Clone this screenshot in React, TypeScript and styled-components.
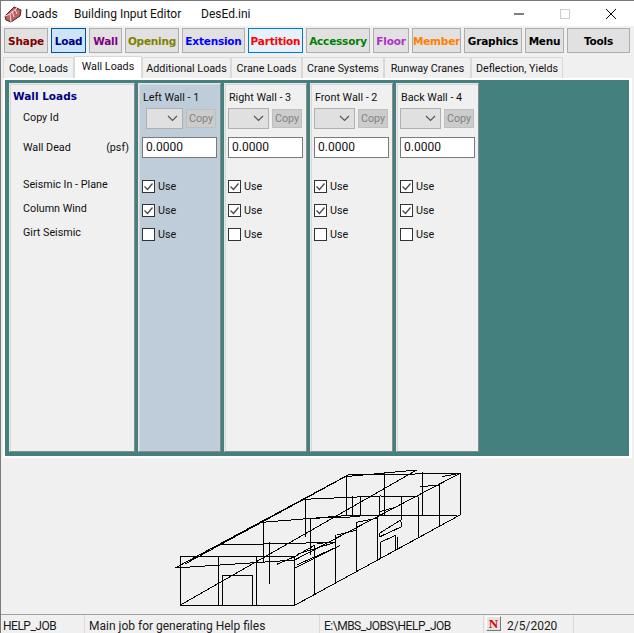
import React from "react";
import styled, { createGlobalStyle } from "styled-components";

const Global = createGlobalStyle`
  html, body {
    margin: 0;
    padding: 0;
    background: #f0f0f0;
  }
`;

const Win = styled.div`
  width: 634px;
  height: 633px;
  box-sizing: border-box;
  overflow: hidden;
  display: flex;
  flex-direction: column;
  background: #f0f0f0;
  border-left: 1px solid #7a7a7a;
  border-top: 1px solid #7a7a7a;
  font-family: Roboto, "Open Sans", sans-serif;
  font-size: 10.75px;
  color: #111;
`;

const TitleBar = styled.div`
  height: 25px;
  flex: none;
  display: flex;
  align-items: center;
  background: #fff;
  font-size: 12px;
`;

const TitleIcon = styled.svg`
  width: 18px;
  height: 18px;
  margin-left: 3px;
  margin-right: 3px;
`;

const TitleText = styled.span<{ $w: number }>`
  width: ${(p) => p.$w}px;
  white-space: nowrap;
`;

const WinButtons = styled.div`
  margin-left: auto;
  display: flex;
  align-items: center;
`;

const WinButton = styled.svg`
  width: 46px;
  height: 25px;
`;

const Toolbar = styled.div`
  flex: none;
  display: flex;
  gap: 3px;
  padding: 2px 0 0 3px;
  height: 27px;
  box-sizing: border-box;
`;

const ToolButton = styled.div<{ $w: number; $color: string; $state?: "on" | "hot" }>`
  width: ${(p) => p.$w}px;
  height: 25px;
  box-sizing: border-box;
  display: flex;
  align-items: center;
  justify-content: center;
  font-family: "DejaVu Sans", sans-serif;
  font-weight: bold;
  font-size: 10.5px;
  letter-spacing: -0.2px;
  color: ${(p) => p.$color};
  background: ${(p) => (p.$state === "on" ? "#cce4f7" : p.$state === "hot" ? "#e5f1fb" : "#e1e1e1")};
  border: ${(p) => (p.$state === "on" ? "1px solid #005499" : p.$state === "hot" ? "1px solid #0078d7" : "1px solid #adadad")};
`;

const Tabs = styled.div`
  flex: none;
  display: flex;
  height: 25px;
  padding: 3px 0 0 2px;
  box-sizing: border-box;
  align-items: flex-end;
`;

const Tab = styled.div<{ $w: number; $active?: boolean }>`
  width: ${(p) => p.$w}px;
  height: ${(p) => (p.$active ? 22 : 21)}px;
  box-sizing: border-box;
  display: flex;
  align-items: center;
  justify-content: center;
  white-space: nowrap;
  padding-bottom: ${(p) => (p.$active ? 2 : 0)}px;
  background: ${(p) => (p.$active ? "#fff" : "#f0f0f0")};
  border: 1px solid #d9d9d9;
  border-bottom: none;
`;

const TabPage = styled.div`
  flex: none;
  height: 380px;
  background: #fff;
  padding: 2px 3px 2px 2px;
  margin: 0 2px 0 2px;
  box-sizing: border-box;
`;

const Teal = styled.div`
  height: 376px;
  box-sizing: border-box;
  background: #44807e;
  display: flex;
  gap: 3px;
  padding: 3px 4px 4px;
`;

const Panel = styled.div<{ $w: number; $tint?: boolean }>`
  width: ${(p) => p.$w}px;
  box-sizing: border-box;
  background: ${(p) => (p.$tint ? "#bfcddb" : "#f0f0f0")};
  border: 1px solid;
  border-color: #e8e8e8 #8a8a8a #8a8a8a #e8e8e8;
  box-shadow: inset 1px 1px 0 #d8d8d8;
  padding: 4px 3px 0 3px;
  display: flex;
  flex-direction: column;
`;

const Heading = styled.div`
  height: 17px;
  font-family: "DejaVu Sans", sans-serif;
  font-weight: bold;
  font-size: 10.5px;
  color: #000080;
  line-height: 17px;
`;

const RowLabel = styled.div<{ $h: number }>`
  height: ${(p) => p.$h}px;
  padding-left: 10px;
  padding-right: 2px;
  display: flex;
  align-items: center;
  justify-content: space-between;
  white-space: nowrap;
`;

const ColTitle = styled.div`
  height: 17px;
  padding-left: 1px;
  line-height: 19px;
  white-space: nowrap;
`;

const CopyRow = styled.div<{ $narrow?: boolean }>`
  margin-top: 3px;
  height: 21px;
  display: flex;
  align-items: center;
  gap: 3px;
  padding-left: ${(p) => (p.$narrow ? 4 : 0)}px;
`;

const Select = styled.div<{ $narrow?: boolean }>`
  width: ${(p) => (p.$narrow ? 37 : 41)}px;
  height: 21px;
  box-sizing: border-box;
  background: #e0e0e0;
  border: 1px solid #b0b0b0;
  display: flex;
  align-items: center;
  justify-content: flex-end;
  padding-right: 4px;
`;

const CopyButton = styled.div`
  width: 30px;
  height: 19px;
  box-sizing: border-box;
  background: #cccccc;
  border: 1px solid #bfbfbf;
  color: #838383;
  display: flex;
  align-items: center;
  justify-content: center;
`;

const ValueInput = styled.div`
  margin-top: 8px;
  width: 75px;
  height: 21px;
  box-sizing: border-box;
  background: #fff;
  border: 1px solid #7a7a7a;
  padding-left: 3px;
  font-size: 12px;
  line-height: 19px;
`;

const CheckRow = styled.div<{ $mt: number }>`
  margin-top: ${(p) => p.$mt}px;
  height: 13px;
  display: flex;
  align-items: center;
  gap: 3px;
`;

const Box = styled.span`
  width: 13px;
  height: 13px;
  box-sizing: border-box;
  background: #fff;
  border: 1px solid #333;
  display: block;
`;

const Preview = styled.div`
  flex: none;
  height: 156px;
  box-sizing: border-box;
  padding-left: 159px;
  padding-top: 7px;
`;

const Wire = styled.svg`
  display: block;
  width: 320px;
  height: 150px;
`;

const StatusBar = styled.div`
  flex: none;
  height: 19px;
  box-sizing: border-box;
  display: flex;
  border-top: 1px solid #a0a0a0;
  color: #1a1a1a;
  font-size: 12px;
`;

const StatusCell = styled.div<{ $w: number; $pad?: number; $tight?: boolean }>`
  width: ${(p) => p.$w}px;
  box-sizing: border-box;
  padding-left: ${(p) => p.$pad ?? 2}px;
  letter-spacing: ${(p) => (p.$tight ? -0.5 : 0)}px;
  border-right: 1px solid #d9d9d9;
  white-space: nowrap;
  line-height: 22px;
  height: 18px;
  overflow: hidden;
`;

const NBadge = styled.div`
  width: 15px;
  height: 15px;
  margin: 1px 6px 0 2px;
  flex: none;
  box-sizing: border-box;
  background: #e4e4e4;
  border: 1px solid;
  border-color: #fff #777 #777 #fff;
  color: #e00000;
  font-family: "Liberation Serif", serif;
  font-weight: bold;
  font-size: 13px;
  line-height: 13px;
  text-align: center;
`;

const tools = [
  { label: "Shape", w: 44, color: "#800000" },
  { label: "Load", w: 35, color: "#000080", state: "on" as const },
  { label: "Wall", w: 33, color: "#800080" },
  { label: "Opening", w: 54, color: "#808000" },
  { label: "Extension", w: 63, color: "#0000ff" },
  { label: "Partition", w: 55, color: "#ff0000", state: "hot" as const },
  { label: "Accessory", w: 64, color: "#008000" },
  { label: "Floor", w: 36, color: "#b030c8" },
  { label: "Member", w: 49, color: "#ff8000" },
  { label: "Graphics", w: 58, color: "#000" },
  { label: "Menu", w: 39, color: "#000" },
  { label: "Tools", w: 63, color: "#000" },
];

const tabs = [
  { label: "Code, Loads", w: 71 },
  { label: "Wall Loads", w: 68, active: true },
  { label: "Additional Loads", w: 89 },
  { label: "Crane Loads", w: 71 },
  { label: "Crane Systems", w: 82 },
  { label: "Runway Cranes", w: 87 },
  { label: "Deflection, Yields", w: 92 },
];

const walls = [
  { title: "Left Wall - 1", tint: true, narrow: true },
  { title: "Right Wall - 3" },
  { title: "Front Wall - 2" },
  { title: "Back Wall - 4" },
];

// wireframe traced at 3x, one line per segment run
const wire = [
  "60,274 404,274 404,421 60,421 60,274",
  "176,274 176,421",
  "188,421 188,332 278,332 278,421",
  "290,274 290,421",
  "60,421 770,15",
  "404,421 900,150",
  "404,310 540,242 410,300",
  "404,285 900,25",
  "45,309 555,35",
  "75,297 565,30",
  "555,35 770,15",
  "565,30 900,25",
  "900,25 900,150",
  "558,35 558,152 900,150",
  "45,309 404,285",
  "180,240 525,232",
  "305,172 580,150 655,150",
  "430,103 660,93 775,95",
  "673,25 673,150",
  "787,22 787,150",
  "838,60 838,182",
  "775,95 775,215",
  "725,95 725,165",
  "310,172 310,290",
  "328,230 328,356",
  "436,103 436,215",
  "451,270 451,160 600,155",
  "463,240 463,388",
  "527,210 527,355",
  "590,172 590,318",
  "652,150 652,285",
  "602,150 602,95",
  "658,95 658,150",
  "577,92 577,150",
  "658,205 722,165 725,185 660,215 658,205",
  "660,280 660,232 705,212 705,258",
  "712,215 712,255",
  "350,298 404,275 465,240",
  "410,268 525,232",
  "470,235 525,232",
  "530,210 590,195",
  "590,172 650,160",
  "660,140 712,125",
  "725,95 775,95",
  "780,65 838,60",
  "845,35 900,25",
];

function Logo() {
  return (
    <TitleIcon viewBox="0 0 18 18">
      <path d="M1 11 L10 2 L17 5 L16 11 L7 17 L2 15 Z" fill="#c06060" stroke="#4a2020" />
      <path d="M7 17 L6 9 L1 11 M6 9 L13 3 M10 12 L8 6 M13 9 L11 4" stroke="#f0e0e0" fill="none" />
    </TitleIcon>
  );
}

function WallColumn({ title, tint, narrow }: { title: string; tint?: boolean; narrow?: boolean }) {
  return (
    <Panel $w={83} $tint={tint}>
      <ColTitle>{title}</ColTitle>
      <CopyRow $narrow={narrow}>
        <Select $narrow={narrow}>
          <svg width="11" height="7" viewBox="0 0 11 7">
            <path d="M1 1 L5.5 5.5 L10 1" fill="none" stroke="#555" strokeWidth="1.2" />
          </svg>
        </Select>
        <CopyButton>Copy</CopyButton>
      </CopyRow>
      <ValueInput>0.0000</ValueInput>
      {[true, true, false].map((on, i) => (
        <CheckRow key={i} $mt={i === 0 ? 22 : 11}>
          <Box>
            {on && (
              <svg width="11" height="11" viewBox="0 0 11 11" style={{ display: "block" }}>
                <path d="M1.5 5.5 L4.5 8.5 L9.5 2.5" fill="none" stroke="#444" strokeWidth="1.2" />
              </svg>
            )}
          </Box>
          <span>Use</span>
        </CheckRow>
      ))}
    </Panel>
  );
}

export default function App() {
  return (
    <>
      <Global />
      <Win>
        <TitleBar>
          <Logo />
          <TitleText $w={49}>Loads</TitleText>
          <TitleText $w={127}>Building Input Editor</TitleText>
          <TitleText $w={80}>DesEd.ini</TitleText>
          <WinButtons>
            <WinButton viewBox="0 0 46 25">
              <path d="M18 13 H28" stroke="#000" />
            </WinButton>
            <WinButton viewBox="0 0 46 25">
              <rect x="18.5" y="8.5" width="9" height="9" fill="none" stroke="#ccc" />
            </WinButton>
            <WinButton viewBox="0 0 46 25">
              <path d="M18 8 L28 18 M28 8 L18 18" stroke="#000" />
            </WinButton>
          </WinButtons>
        </TitleBar>
        <Toolbar>
          {tools.map((t) => (
            <ToolButton key={t.label} $w={t.w} $color={t.color} $state={t.state}>
              {t.label}
            </ToolButton>
          ))}
        </Toolbar>
        <Tabs>
          {tabs.map((t) => (
            <Tab key={t.label} $w={t.w} $active={t.active}>
              {t.label}
            </Tab>
          ))}
        </Tabs>
        <TabPage>
          <Teal>
            <Panel $w={126}>
              <Heading>Wall Loads</Heading>
              <RowLabel $h={24}>Copy Id</RowLabel>
              <RowLabel $h={36}>
                <span>Wall Dead</span>
                <span>(psf)</span>
              </RowLabel>
              <RowLabel $h={38}>Seismic In - Plane</RowLabel>
              <RowLabel $h={10}>Column Wind</RowLabel>
              <RowLabel $h={38}>Girt Seismic</RowLabel>
            </Panel>
            {walls.map((w) => (
              <WallColumn key={w.title} title={w.title} tint={w.tint} narrow={w.narrow} />
            ))}
          </Teal>
        </TabPage>
        <Preview>
          <Wire viewBox="0 0 960 450" shapeRendering="crispEdges">
            {wire.map((pts, i) => (
              <polyline key={i} points={pts} fill="none" stroke="#000" strokeWidth="3" />
            ))}
          </Wire>
        </Preview>
        <StatusBar>
          <StatusCell $w={84} $pad={2} $tight>HELP_JOB</StatusCell>
          <StatusCell $w={235} $pad={4}>Main job for generating Help files</StatusCell>
          <StatusCell $w={164} $pad={4} $tight>E:\MBS_JOBS\HELP_JOB</StatusCell>
          <NBadge>N</NBadge>
          <StatusCell $w={67} $pad={0}>2/5/2020</StatusCell>
        </StatusBar>
      </Win>
    </>
  );
}
